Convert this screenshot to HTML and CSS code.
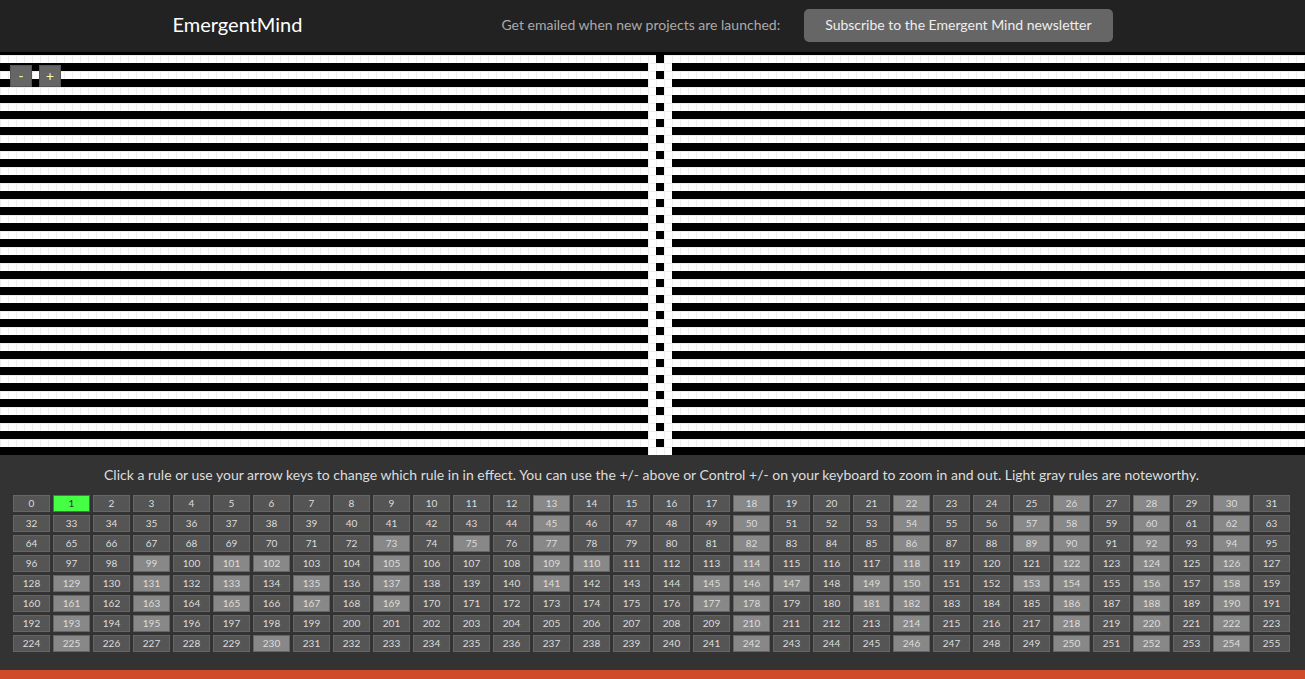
FILE: index.html
```html
<!DOCTYPE html>
<html lang="en">
<head>
<meta charset="utf-8">
<title>EmergentMind</title>
<link rel="stylesheet" href="styles.css">
</head>
<body>
<header class="site-header">
  <div class="header-inner">
    <a class="brand" href="#">EmergentMind</a>
    <div class="subscribe">
      <span class="subscribe-label">Get emailed when new projects are launched:</span>
      <a class="subscribe-button" href="#">Subscribe to the Emergent Mind newsletter</a>
    </div>
  </div>
</header>
<main>
  <section class="stage">
    <canvas class="automaton" id="automaton" aria-label="Cellular automaton"></canvas>
    <div class="zoom">
      <button class="zoom-button" id="zoom-out" type="button">-</button>
      <button class="zoom-button" id="zoom-in" type="button">+</button>
    </div>
  </section>
  <section class="rules">
    <p class="help">Click a rule or use your arrow keys to change which rule in in effect. You can use the +/- above or Control +/- on your keyboard to zoom in and out. Light gray rules are noteworthy.</p>
    <div class="rule-grid" id="rule-grid"></div>
  </section>
</main>
<footer class="site-footer"></footer>
<script src="script.js"></script>
</body>
</html>
```
FILE: styles.css
```css
* { box-sizing: border-box; }

body {
  margin: 0;
  min-height: 100vh;
  display: flex;
  flex-direction: column;
  background: #333;
  color: #ddd;
  font-family: Lato, "Open Sans", sans-serif;
  font-size: 14px;
  line-height: 20px;
}

.site-header {
  background: #222;
  border-bottom: 3px solid #000;
}

.header-inner {
  max-width: 960px;
  margin: 0 auto;
  padding: 9px 20px 10px 0;
  display: flex;
  align-items: center;
  justify-content: space-between;
}

.brand {
  padding-bottom: 4px;
  color: #fff;
  font-size: 20px;
  text-decoration: none;
}

.subscribe {
  display: flex;
  align-items: baseline;
  gap: 24px;
}

.subscribe-label { color: #aaa; }

.subscribe-button {
  padding: 6px 21px 7px;
  border-radius: 5px;
  background: #666;
  color: #eee;
  text-decoration: none;
}

.stage { position: relative; }

.automaton {
  display: block;
  width: 100%;
  height: 400px;
}

.zoom {
  position: absolute;
  top: 10px;
  left: 10px;
  display: flex;
  gap: 7px;
}

.zoom-button {
  width: 22px;
  height: 22px;
  padding: 0;
  border: 1px solid #555;
  background: #666;
  color: #ff9;
  font-family: inherit;
  font-size: 14px;
  line-height: 20px;
  cursor: pointer;
}

.rules { padding: 10px 15px 18px 13px; }

.help {
  margin: 0 0 10px;
  text-align: center;
}

.rule-grid {
  display: grid;
  grid-template-columns: repeat(32, 1fr);
  gap: 3px;
}

.rule {
  height: 17px;
  min-width: 0;
  padding: 0;
  border: 1px solid #666;
  background: #555;
  color: #ddd;
  font-family: inherit;
  font-size: 10px;
  line-height: 15px;
  cursor: pointer;
}

.rule.noteworthy { background: #888; }

.rule.active {
  background: #4f4;
  color: #333;
}

.site-footer {
  flex: 1;
  min-height: 9px;
  background: #cf4b2a;
}
```
FILE: script.js
```js
const noteworthy = new Set([
  13, 18, 22, 26, 28, 30,
  45, 50, 54, 57, 58, 60, 62,
  73, 75, 77, 82, 86, 89, 90, 92, 94,
  99, 101, 102, 105, 109, 110, 114, 118, 122, 124, 126,
  129, 131, 133, 135, 137, 141, 145, 146, 147, 149, 150, 153, 154, 156, 158,
  161, 163, 165, 167, 169, 177, 178, 181, 182, 186, 188, 190,
  193, 195, 210, 214, 218, 220, 222,
  225, 230, 242, 246, 250, 252, 254
]);

let rule = 1;
let cell = 8;
const canvas = document.getElementById("automaton");
const grid = document.getElementById("rule-grid");

function draw() {
  const width = canvas.width = canvas.clientWidth;
  const height = canvas.height = canvas.clientHeight;
  const ctx = canvas.getContext("2d");
  const columns = Math.ceil(width / cell);
  const rows = Math.ceil(height / cell);
  let state = new Array(columns).fill(0);
  state[Math.floor(columns / 2)] = 1;
  for (let y = 0; y < rows; y++) {
    for (let x = 0; x < columns; x++) {
      ctx.fillStyle = state[x] ? "#000" : "#eee";
      ctx.fillRect(x * cell, y * cell, cell, cell);
      if (!state[x]) {
        ctx.fillStyle = "#fff";
        ctx.fillRect(x * cell + 1, y * cell + 1, cell - 1, cell - 1);
      }
    }
    state = state.map((value, x) => {
      const left = state[(x + columns - 1) % columns];
      const right = state[(x + 1) % columns];
      return (rule >> (left * 4 + value * 2 + right)) & 1;
    });
  }
}

function select(value) {
  grid.children[rule].classList.remove("active");
  rule = (value + 256) % 256;
  grid.children[rule].classList.add("active");
  draw();
}

function zoom(step) {
  cell = Math.min(32, Math.max(2, cell + step));
  draw();
}

for (let i = 0; i < 256; i++) {
  const button = document.createElement("button");
  button.type = "button";
  button.className = noteworthy.has(i) ? "rule noteworthy" : "rule";
  button.textContent = i;
  button.addEventListener("click", () => select(i));
  grid.append(button);
}

document.getElementById("zoom-out").addEventListener("click", () => zoom(-1));
document.getElementById("zoom-in").addEventListener("click", () => zoom(1));
document.addEventListener("keydown", (event) => {
  const step = { ArrowLeft: -1, ArrowRight: 1, ArrowUp: -32, ArrowDown: 32 }[event.key];
  if (step) select(rule + step);
});
window.addEventListener("resize", draw);
select(1);
```
